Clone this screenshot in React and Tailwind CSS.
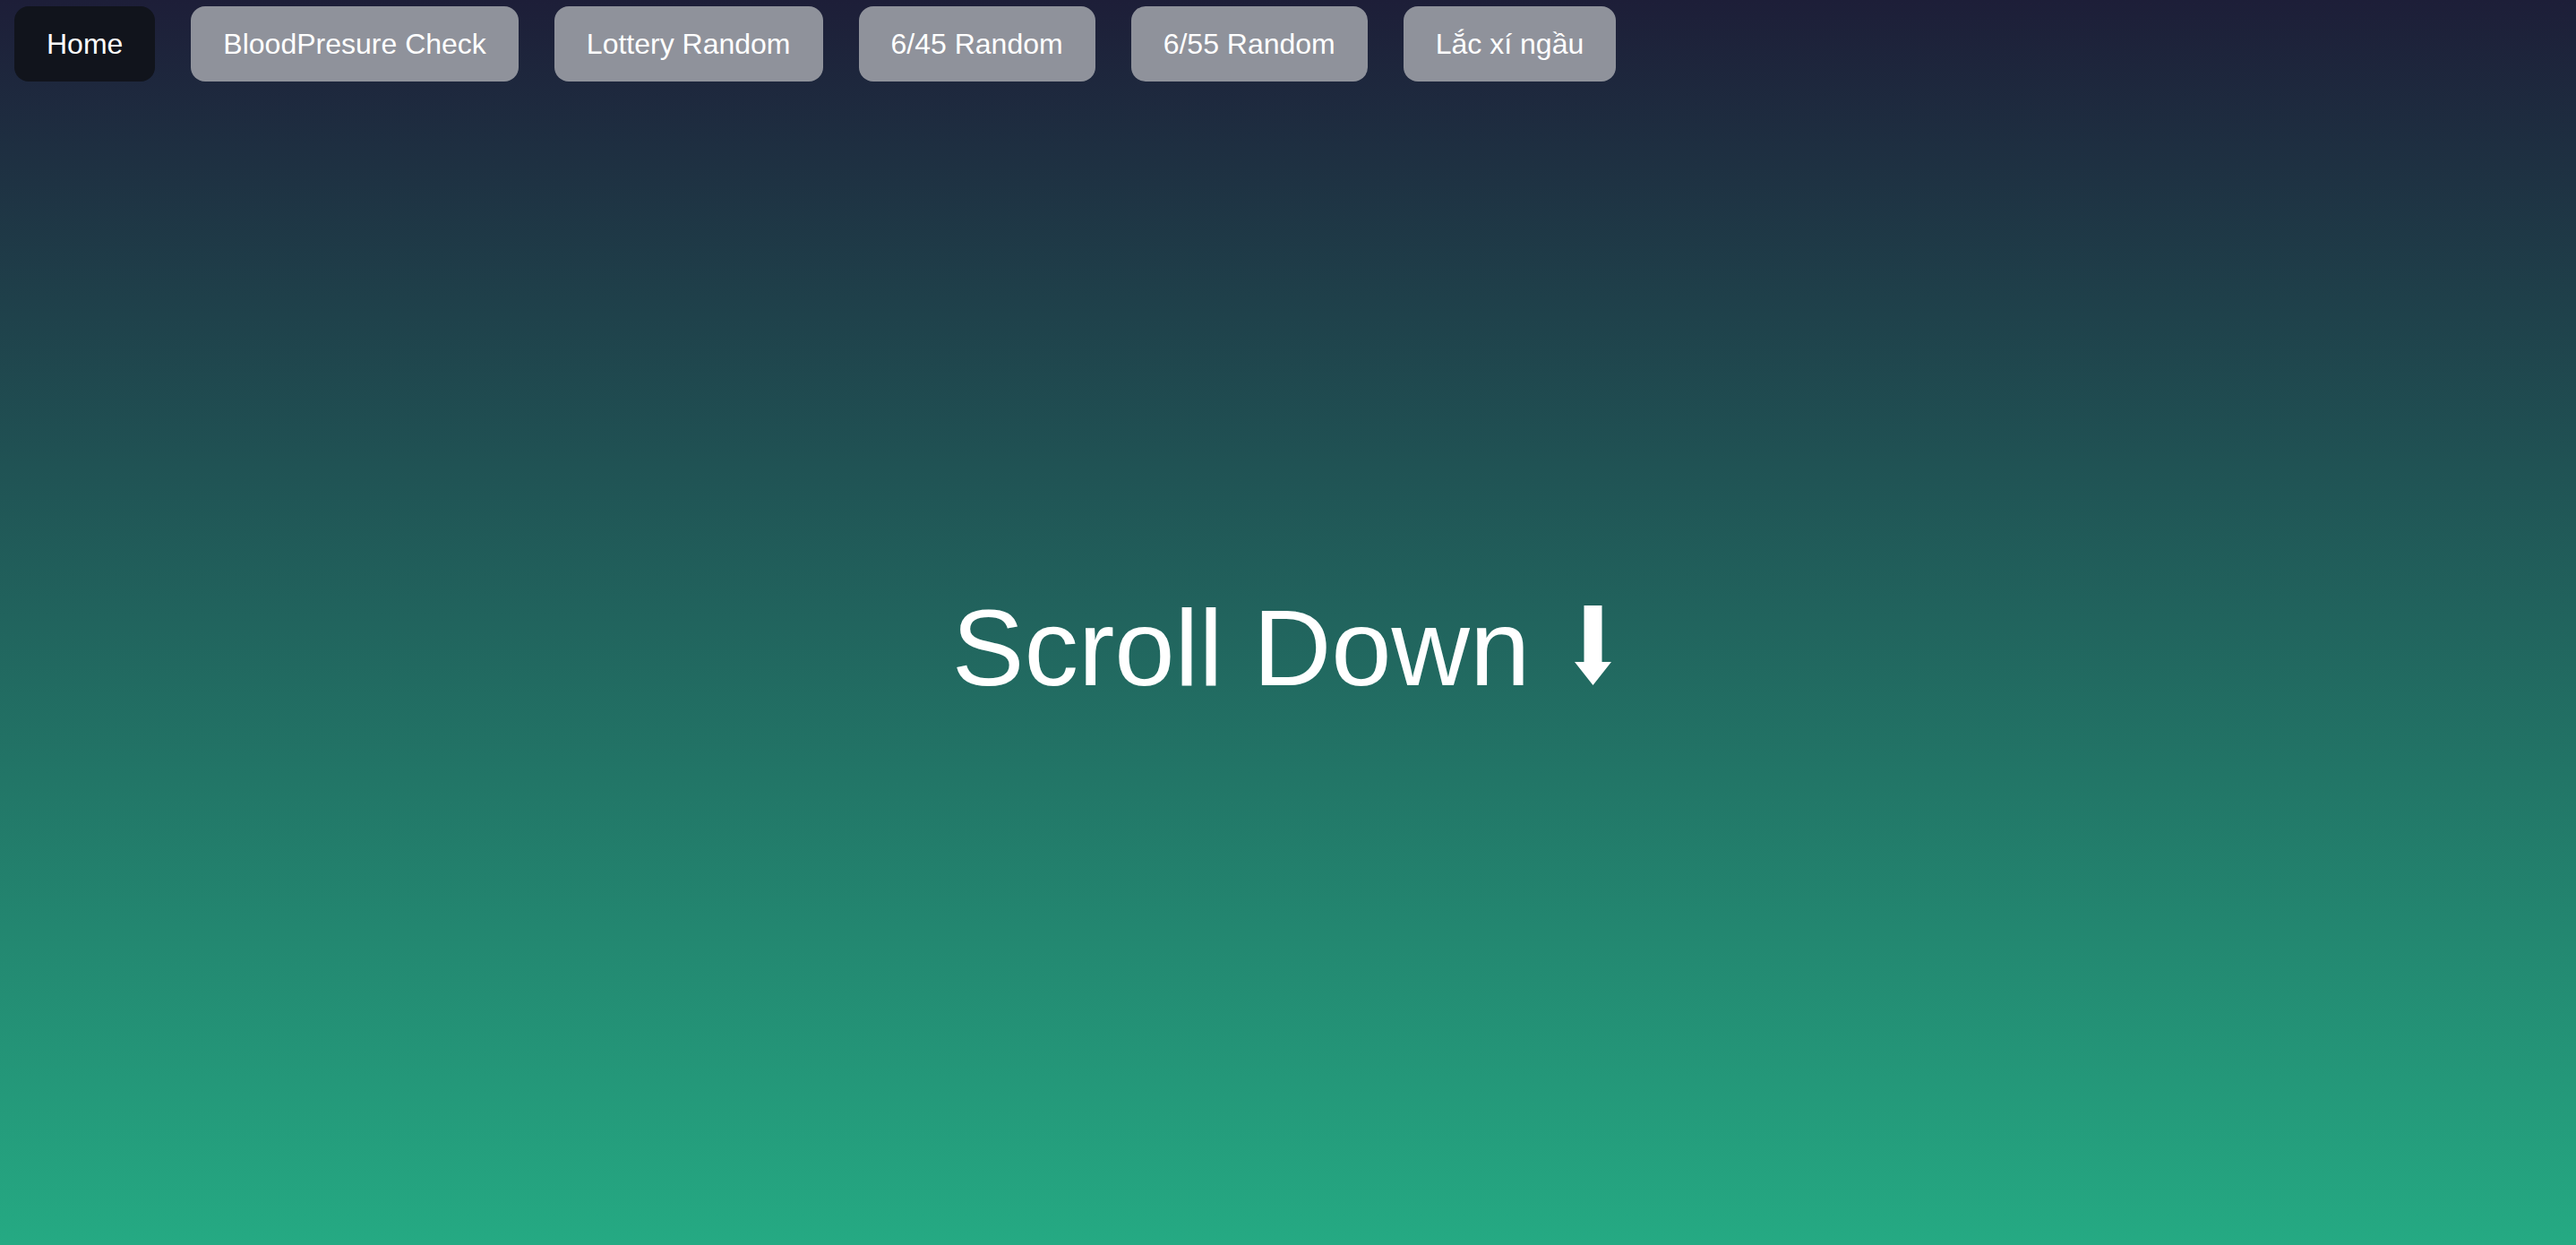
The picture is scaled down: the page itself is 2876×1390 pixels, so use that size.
const links = ["BloodPresure Check", "Lottery Random", "6/45 Random", "6/55 Random", "Lắc xí ngầu"]

const App = () => {
  return (
    <div className="h-screen flex flex-col bg-[linear-gradient(to_bottom,#1d1e38,#25aa83)] font-['Liberation_Sans',Arial,sans-serif] text-white overflow-hidden">
      <nav className="flex gap-[40px] px-[16px] py-[7px]">
        <button className="bg-[#11141c] rounded-[16px] px-[36px] h-[84px] text-[32px] leading-none">Home</button>
        {links.map((l) => (
          <button key={l} className="bg-[#8f929b] rounded-[16px] px-[36px] h-[84px] text-[32px] leading-none">{l}</button>
        ))}
      </nav>
      <main className="flex-1 flex items-center justify-center pb-[40px] pr-[14px]">
        <h1 className="text-[121px] flex items-baseline gap-[50px]">
          <span>Scroll Down</span>
          <svg width="41" height="89" viewBox="0 0 41 89">
            <path d="M10.5 0H30.5V63H41L20.5 89L0 63H10.5Z" fill="#fff" />
          </svg>
        </h1>
      </main>
    </div>
  )
}

export default App
